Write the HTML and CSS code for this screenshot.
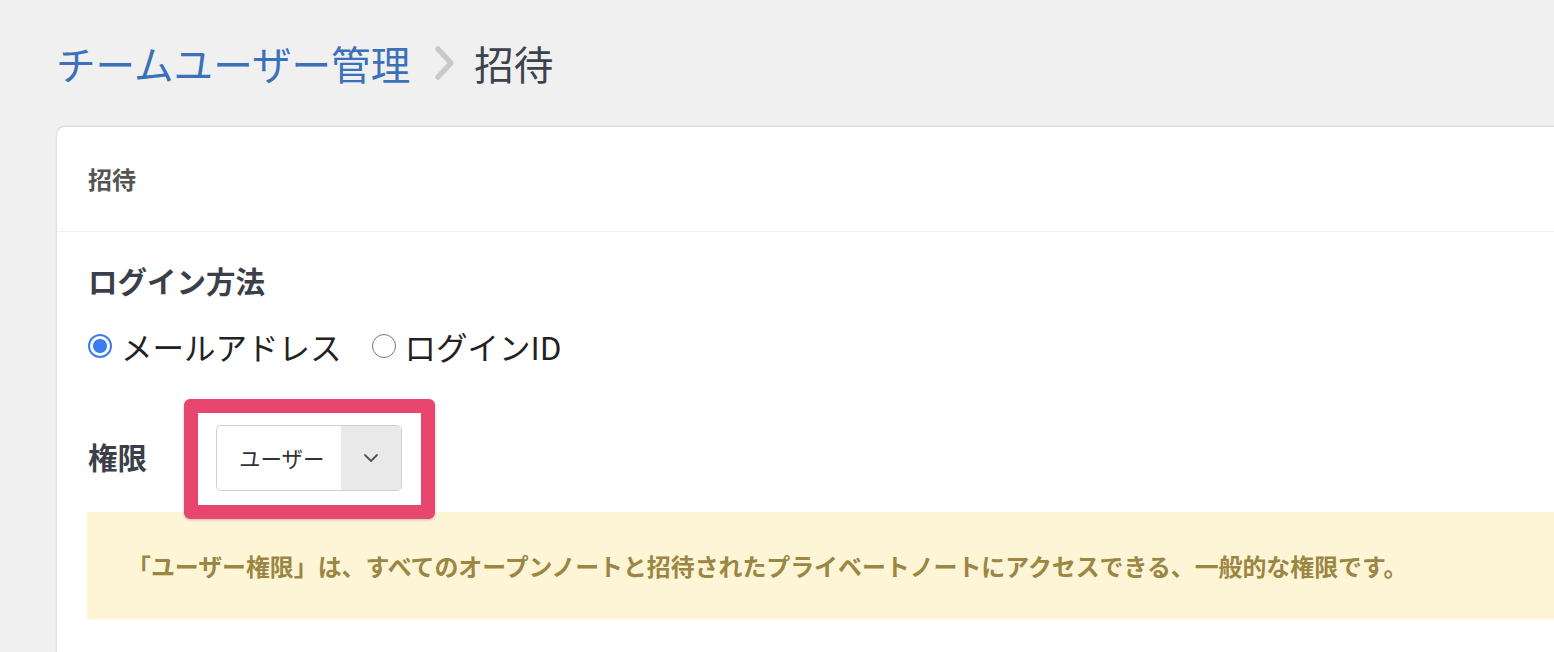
FILE: index.html
```html
<!DOCTYPE html>
<html lang="ja">
<head>
<meta charset="utf-8">
<title>招待</title>
<link rel="stylesheet" href="styles.css">
</head>
<body>
<nav class="crumbs">
  <a class="crumb-link">チームユーザー管理</a>
  <svg class="crumb-sep" width="22" height="36" viewBox="0 0 22 36"><path d="M4 4 L17 18 L4 32" fill="none" stroke="#c9c9c9" stroke-width="5.5" stroke-linecap="round" stroke-linejoin="round"/></svg>
  <span class="crumb-current">招待</span>
</nav>
<section class="card">
  <header class="card-head">招待</header>
  <div class="card-body">
    <h2 class="field-title">ログイン方法</h2>
    <div class="radios">
      <label class="radio"><span class="dot dot-on"></span><span>メールアドレス</span></label>
      <label class="radio"><span class="dot"></span><span>ログインID</span></label>
    </div>
    <div class="role-row">
      <span class="role-label">権限</span>
      <div class="select-wrap">
        <div class="select">
          <span class="select-value">ユーザー</span>
          <span class="select-arrow"><svg width="16" height="10" viewBox="0 0 16 10"><path d="M2 2 L8 8 L14 2" fill="none" stroke="#555" stroke-width="1.8" stroke-linecap="round" stroke-linejoin="round"/></svg></span>
        </div>
        <span class="highlight"></span>
      </div>
    </div>
    <div class="notice">「ユーザー権限」は、すべてのオープンノートと招待されたプライベートノートにアクセスできる、一般的な権限です。</div>
  </div>
</section>
</body>
</html>
```
FILE: styles.css
```css
html, body {
  margin: 0;
  padding: 0;
  overflow: hidden;
  background: #f0f0f0;
  font-family: "Noto Sans CJK JP", "Noto Sans", sans-serif;
}
.crumbs {
  display: flex;
  align-items: center;
  height: 50px;
  margin-top: 38px;
  padding-left: 56px;
  font-size: 39.6px;
  line-height: 50px;
}
.crumb-link {
  color: #3a71b8;
}
.crumb-sep {
  margin: 0 18px 0 24px;
}
.crumb-current {
  color: #3d434d;
}
.card {
  margin: 39px -40px 0 57px;
  background: #fff;
  border-radius: 8px 0 0 0;
  box-shadow: 0 -1px 2px rgba(0,0,0,0.12), 0 1px 3px rgba(0,0,0,0.08);
  min-height: 600px;
}
.card-head {
  padding: 37px 31px 37px;
  font-size: 24px;
  line-height: 30px;
  font-weight: 700;
  color: #555;
  border-bottom: 1px solid #f0f0f0;
}
.card-body {
  padding: 30px 30px 30px 30px;
}
.field-title {
  margin: 0 0 0 1px;
  font-size: 29.5px;
  line-height: 36px;
  font-weight: 700;
  color: #3b3f49;
}
.radios {
  display: flex;
  align-items: center;
  gap: 30px;
  margin-top: 28px;
  height: 40px;
  padding-left: 1px;
}
.radio {
  display: flex;
  align-items: center;
  gap: 9px;
  font-size: 31.5px;
  line-height: 40px;
  color: #222;
}
.dot {
  box-sizing: border-box;
  width: 24px;
  height: 24px;
  border-radius: 50%;
  border: 1.5px solid #777;
  background: #fff;
}
.dot-on {
  border: 2px solid #3b7cf2;
  background: radial-gradient(circle, #3b7cf2 0 6.5px, #fff 7.5px);
}
.role-row {
  display: flex;
  align-items: center;
  margin-top: 59px;
  padding-left: 1px;
}
.role-label {
  width: 128px;
  margin-bottom: 5px;
  font-size: 29.5px;
  font-weight: 700;
  line-height: 36px;
  color: #3b3f49;
}
.select-wrap {
  position: relative;
}
.select {
  position: relative;
  z-index: 2;
  box-sizing: border-box;
  display: flex;
  width: 186px;
  height: 66px;
  border: 1px solid #cfcfcf;
  border-radius: 5px;
  overflow: hidden;
  background: #fff;
}
.select-value {
  flex: 1;
  padding-left: 22px;
  font-size: 21.5px;
  line-height: 64px;
  color: #333;
}
.select-arrow {
  width: 60px;
  display: flex;
  align-items: center;
  justify-content: center;
  background: #e9e9e9;
}
.highlight {
  position: absolute;
  z-index: 3;
  top: -26px;
  left: -32px;
  right: -33px;
  bottom: -28px;
  border: 14px solid #e9466f;
  border-radius: 6px;
  box-shadow: 0 1px 3px rgba(0,0,0,0.2);
  pointer-events: none;
}
.notice {
  margin-top: 21px;
  height: 107px;
  box-sizing: border-box;
  padding-left: 40px;
  display: flex;
  align-items: center;
  background: #fdf5d6;
  color: #9b8643;
  font-size: 23.9px;
  font-weight: 700;
  white-space: nowrap;
}
```
